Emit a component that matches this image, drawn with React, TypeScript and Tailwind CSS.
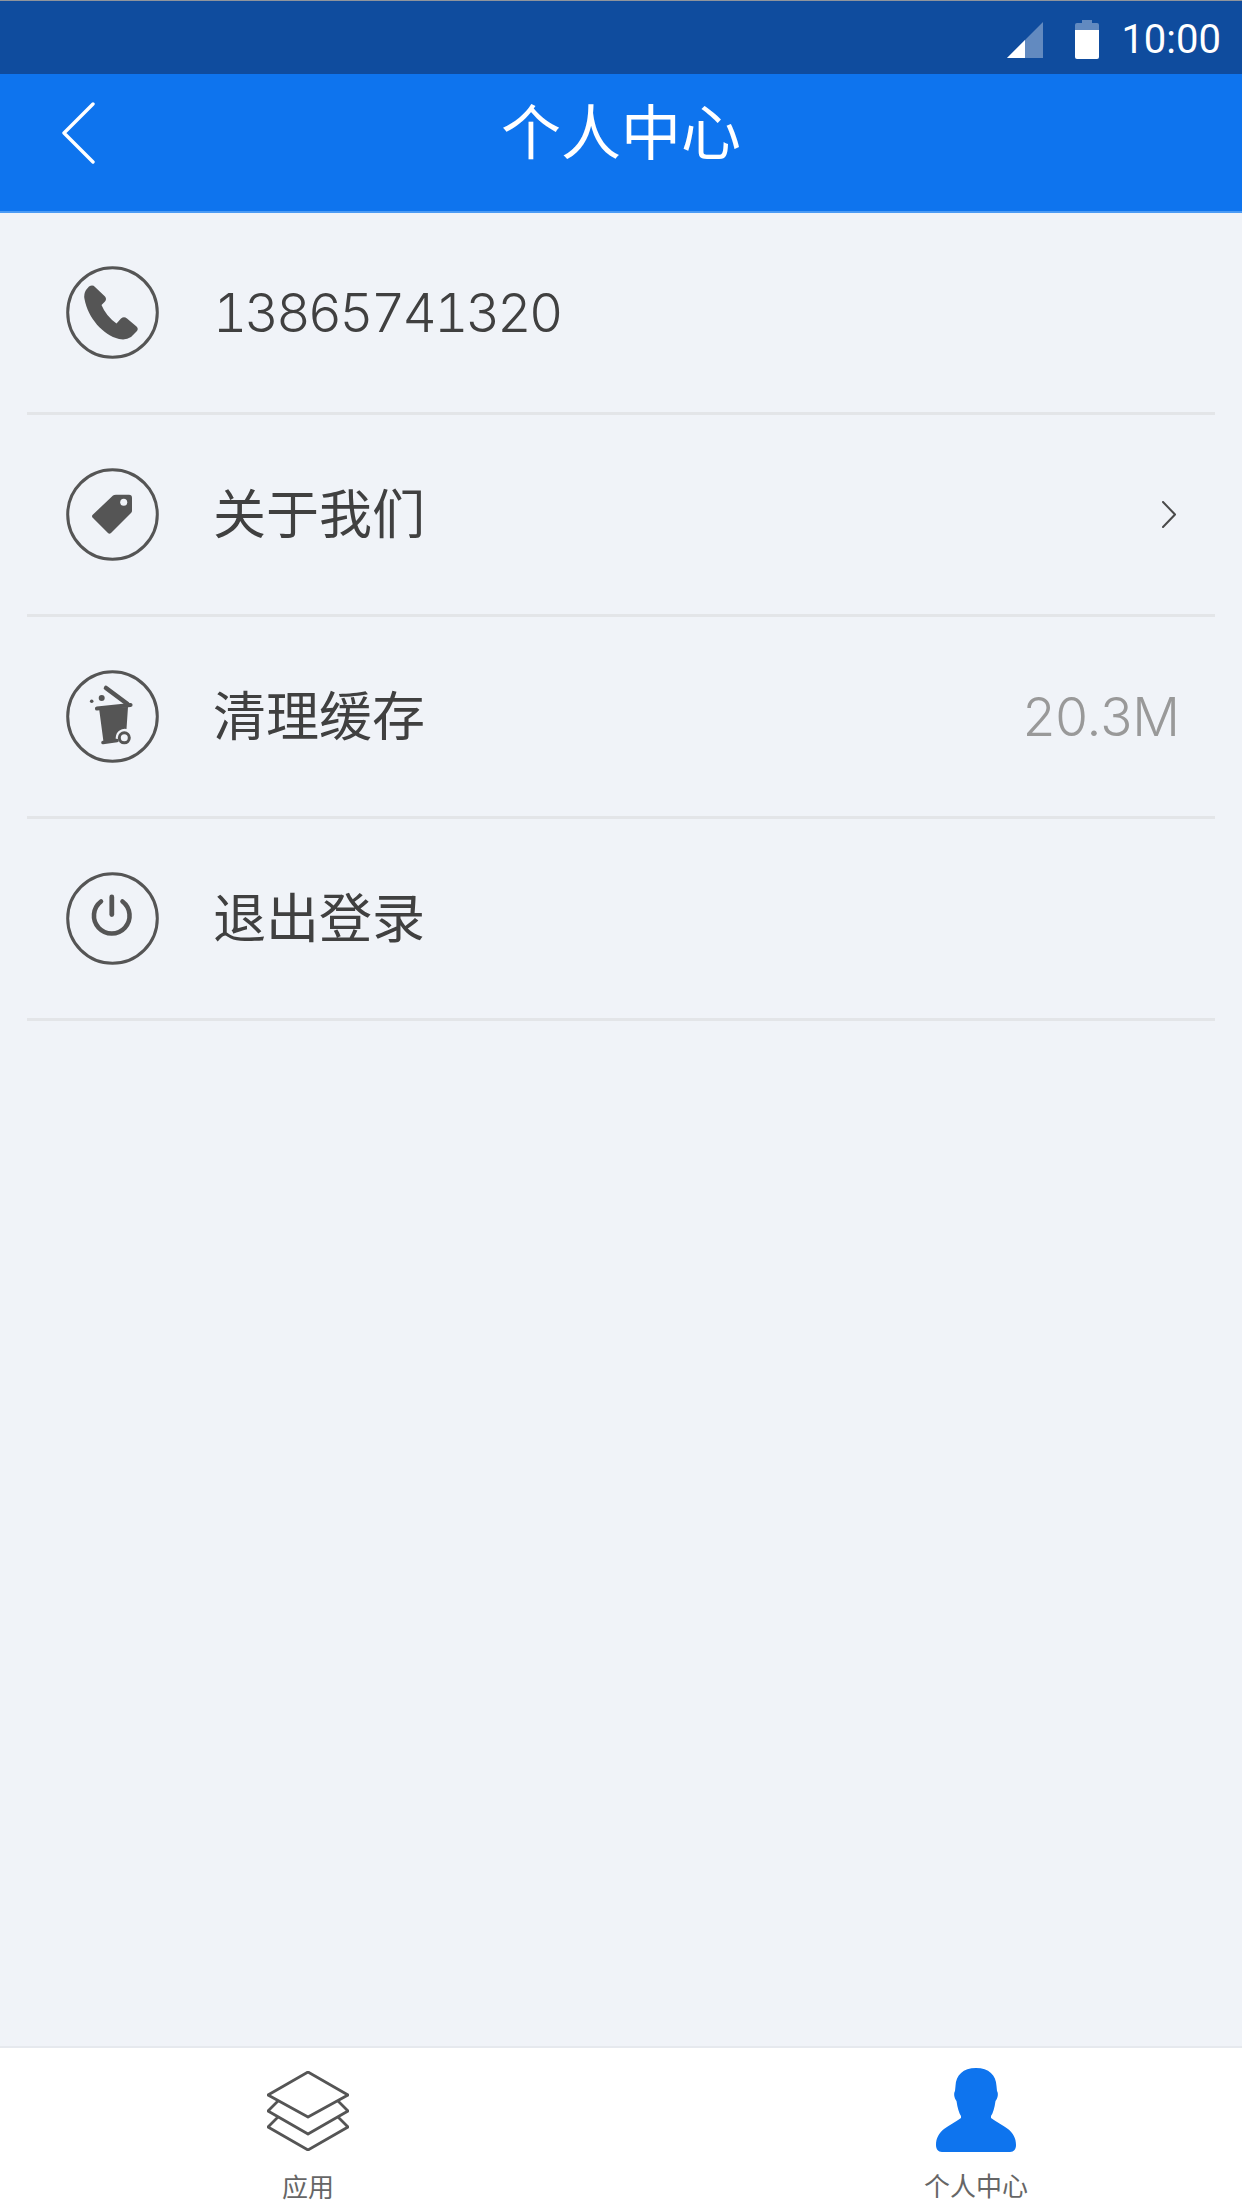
import type { ReactNode } from "react";

const cjk = "font-['Inter','Noto_Sans_CJK_SC',sans-serif]";

function IconCircle({ children }: { children: ReactNode }) {
  return (
    <svg viewBox="0 0 93 93" className="w-[93px] h-[93px] shrink-0 text-[#555555]">
      <circle cx="46.5" cy="46.5" r="44.8" fill="none" stroke="currentColor" strokeWidth="3" />
      {children}
    </svg>
  );
}

function Row({ icon, label, right }: { icon: ReactNode; label: ReactNode; right?: ReactNode }) {
  return (
    <div className="h-[202px] mx-[27px] border-b-[3px] border-[#e3e5e8] flex items-center pl-[39px] pr-[38px]">
      {icon}
      <span className={`ml-[54px] pt-[3px] flex-1 text-[53px] font-normal text-[#404040] ${cjk}`}>{label}</span>
      {right}
    </div>
  );
}

export default function App() {
  return (
    <div className={`w-[1242px] h-[2208px] flex flex-col bg-[#f0f3f8] ${cjk}`}>
      {/* Status bar */}
      <div className="h-[74px] border-t border-[#8f949c] bg-[#0f4c9e] flex items-center justify-end pr-[21px] text-white">
        <svg viewBox="0 0 36 36" className="w-[36px] h-[36px] mt-[5px]">
          <polygon points="36,0 36,36 0,36" fill="#ffffff" opacity="0.35" />
          <polygon points="18,18 18,36 0,36" fill="#ffffff" />
        </svg>
        <svg viewBox="0 0 24 39" className="w-[24px] h-[39px] ml-[32px] mt-[3px]">
          <path d="M7 0h10v3h5a2 2 0 0 1 2 2v5H0V5a2 2 0 0 1 2-2h5z" fill="#ffffff" opacity="0.35" />
          <path d="M0 10h24v27a2 2 0 0 1-2 2H2a2 2 0 0 1-2-2z" fill="#ffffff" />
        </svg>
        <span className="ml-[22px] pt-[4px] text-[40px] font-['Roboto',sans-serif] leading-none font-normal">10:00</span>
      </div>

      {/* Header */}
      <div className="h-[139px] bg-[#0e74ee] border-b-2 border-[#4b9bf5] grid grid-cols-[1fr_auto_1fr] items-center pl-[61px] pb-[19px]">
        <svg viewBox="0 0 34 62" className="w-[34px] h-[62px]" fill="none">
          <path d="M32 2 L3 31 L32 60" stroke="#ffffff" strokeWidth="3.4" strokeLinecap="round" strokeLinejoin="round" />
        </svg>
        <span className="text-[60px] font-normal text-white leading-none -ml-[61px]">个人中心</span>
        <span />
      </div>

      {/* List */}
      <div className="flex-1">
        <Row
          label={<span className="tabular-nums font-light tracking-[-2.7px]">13865741320</span>}
          icon={
            <IconCircle>
              <path
                d="M23 20.5 Q26.7 18.5 29 21 L39 30.5 Q41 33 39 35.5 L35.5 39 Q40 50 50.5 57.5 L55 52.5 Q58 50 61 52.5 L70.5 60.5 Q73 63 70.5 65.5 L65 71 Q60 74.5 53 73 C37 69 22 52 18.5 33 Q17.5 28 20 24z"
                fill="currentColor"
              />
            </IconCircle>
          }
        />
        <Row
          label="关于我们"
          icon={
            <IconCircle>
              <path
                d="M27 46.5 L47 27.5 Q48 26.7 50 26.7 L63 26.7 Q66 26.7 66 30 L66 43 Q66 44 65 45 L45 65 Q43.3 66.3 42 65 L27 50 Q25 48 27 46.5z"
                fill="currentColor"
              />
              <circle cx="57.7" cy="34.3" r="3.5" fill="#f0f3f8" />
            </IconCircle>
          }
          right={
            <svg viewBox="0 0 14 27" className="w-[14px] h-[27px] mr-[1px]" fill="none">
              <path d="M1 1 L13 13.5 L1 26" stroke="#4a4a4a" strokeWidth="2" strokeLinecap="round" />
            </svg>
          }
        />
        <Row
          label="清理缓存"
          icon={
            <IconCircle>
              <path d="M40 18 L61.5 34" stroke="currentColor" strokeWidth="4.6" strokeLinecap="round" />
              <path d="M31 38.5 L64.5 35" stroke="currentColor" strokeWidth="4.2" strokeLinecap="round" />
              <path d="M33 38 L37.5 72 L50 70 A9 9 0 0 1 60.5 59 L62 37z" fill="currentColor" />
              <path d="M37 72.5 L51 70.5" stroke="currentColor" strokeWidth="3.6" strokeLinecap="round" />
              <circle cx="58.3" cy="67.8" r="5" fill="#f0f3f8" stroke="currentColor" strokeWidth="3" />
              <circle cx="35.7" cy="28" r="3" fill="currentColor" />
              <circle cx="25.7" cy="31.3" r="1.8" fill="currentColor" />
            </IconCircle>
          }
          right={<span className="pt-[3px] -mr-[3px] text-[53px] font-light text-[#999999]">20.3M</span>}
        />
        <Row
          label="退出登录"
          icon={
            <IconCircle>
              <path d="M35 29.5 A17.8 17.8 0 1 0 56.5 29.5" fill="none" stroke="currentColor" strokeWidth="4.6" strokeLinecap="round" />
              <path d="M45.8 25 L45.8 42.5" stroke="currentColor" strokeWidth="4.8" strokeLinecap="round" />
            </IconCircle>
          }
        />
      </div>

      {/* Tab bar */}
      <div className="h-[162px] bg-white border-t-2 border-[#e6e9ee] flex justify-between pl-[267px] pr-[214px]">
        <div className="flex flex-col items-center pt-[23px]">
          <svg viewBox="0 0 82 80" className="w-[82px] h-[80px]" fill="none" stroke="#555555" strokeWidth="2.8" strokeLinejoin="round">
            <path d="M41 1 L81 24 L41 46 L1 24z" />
            <path d="M11 30 L1 40 L41 63 L81 40 L71 30" />
            <path d="M11 46 L1 56 L41 79 L81 56 L71 46" />
          </svg>
          <span className="mt-[24px] text-[26px] leading-none text-[#666666]">应用</span>
        </div>
        <div className="flex flex-col items-center pt-[20px]">
          <svg viewBox="0 0 82 84" className="w-[82px] h-[84px]">
            <path
              d="M41 0 C54 0 61 7 61.5 18 L62 23 C63.5 25 63 30 60.5 33 C59.5 40 58 45 56 48 L56 50 C61 54 68 57 73 61 C78 65 81 70 81 77 C81 81 79 84 75 84 L7 84 C3 84 1 81 1 77 C1 70 4 65 9 61 C14 57 21 54 26 50 L26 48 C24 45 22.5 40 21.5 33 C19 30 18.5 25 20 23 L20.5 18 C21 7 28 0 41 0z"
              fill="#0e74ee"
            />
          </svg>
          <span className="mt-[22px] text-[26px] leading-none text-[#666666]">个人中心</span>
        </div>
      </div>
    </div>
  );
}
